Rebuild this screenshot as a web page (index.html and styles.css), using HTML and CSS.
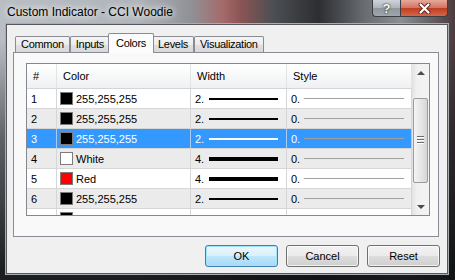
FILE: index.html
```html
<!DOCTYPE html>
<html lang="en">
<head>
    <meta charset="UTF-8">
    <title>Custom Indicator - CCI Woodie</title>
    <link rel="stylesheet" href="styles.css">
</head>
<body>
    <div class="window">
        <div class="titlebar">
            <span class="title">Custom Indicator - CCI Woodie</span>
            <div class="caption">
                <span class="cap-btn help">?</span>
                <span class="cap-btn close">
                    <svg width="13" height="11" viewBox="0 0 13 11">
                        <path d="M2.5 1.5 L10.5 9.5 M10.5 1.5 L2.5 9.5" stroke="#5a2a22" stroke-width="4" stroke-linecap="round"/>
                        <path d="M2.5 1.5 L10.5 9.5 M10.5 1.5 L2.5 9.5" stroke="#fff" stroke-width="2.2" stroke-linecap="round"/>
                    </svg>
                </span>
            </div>
        </div>

        <div class="client">
            <div class="tabs">
                <span class="tab">Common</span>
                <span class="tab">Inputs</span>
                <span class="tab active">Colors</span>
                <span class="tab">Levels</span>
                <span class="tab">Visualization</span>
            </div>

            <div class="panel">
                <div class="list">
                    <div class="grid">
                        <div class="row head">
                            <span>#</span>
                            <span>Color</span>
                            <span>Width</span>
                            <span>Style</span>
                        </div>
                        <div class="row">
                            <span>1</span>
                            <span class="color"><i class="swatch"></i>255,255,255</span>
                            <span class="width">2.<i class="wline w2"></i></span>
                            <span class="style">0.<i class="sline"></i></span>
                        </div>
                        <div class="row alt">
                            <span>2</span>
                            <span class="color"><i class="swatch"></i>255,255,255</span>
                            <span class="width">2.<i class="wline w2"></i></span>
                            <span class="style">0.<i class="sline"></i></span>
                        </div>
                        <div class="row selected">
                            <span>3</span>
                            <span class="color"><i class="swatch"></i>255,255,255</span>
                            <span class="width">2.<i class="wline w2"></i></span>
                            <span class="style">0.<i class="sline"></i></span>
                        </div>
                        <div class="row alt">
                            <span>4</span>
                            <span class="color"><i class="swatch white"></i>White</span>
                            <span class="width">4.<i class="wline w4"></i></span>
                            <span class="style">0.<i class="sline"></i></span>
                        </div>
                        <div class="row">
                            <span>5</span>
                            <span class="color"><i class="swatch red"></i>Red</span>
                            <span class="width">4.<i class="wline w4"></i></span>
                            <span class="style">0.<i class="sline"></i></span>
                        </div>
                        <div class="row alt">
                            <span>6</span>
                            <span class="color"><i class="swatch"></i>255,255,255</span>
                            <span class="width">2.<i class="wline w2"></i></span>
                            <span class="style">0.<i class="sline"></i></span>
                        </div>
                        <div class="row">
                            <span>7</span>
                            <span class="color"><i class="swatch"></i>255,255,255</span>
                            <span class="width">2.<i class="wline w2"></i></span>
                            <span class="style">0.<i class="sline"></i></span>
                        </div>
                    </div>

                    <div class="scrollbar">
                        <div class="sb-btn"><i class="arrow up"></i></div>
                        <div class="track">
                            <div class="thumb">
                                <div class="grip"><i></i><i></i><i></i></div>
                            </div>
                        </div>
                        <div class="sb-btn"><i class="arrow down"></i></div>
                    </div>
                </div>
            </div>

            <div class="buttons">
                <button class="btn default">OK</button>
                <button class="btn">Cancel</button>
                <button class="btn">Reset</button>
            </div>
        </div>
    </div>
</body>
</html>
```

FILE: styles.css
```css
* {
    margin: 0;
    padding: 0;
    box-sizing: border-box;
}

body {
    width: 455px;
    height: 280px;
    overflow: hidden;
    font-family: "Liberation Sans", Arial, sans-serif;
    font-size: 11px;
    color: #000;
    background: #202326;
}

i {
    display: block;
    font-style: normal;
}

.window {
    width: 455px;
    height: 280px;
    background:
        linear-gradient(180deg, rgba(0, 0, 0, 0) 0, rgba(0, 0, 0, 0) 40px, rgba(18, 20, 23, 0.55) 140px, rgba(14, 16, 19, 0.92) 270px),
        linear-gradient(90deg, #b9bec4 0%, #b0b5bb 30%, #8f9196 42%, #a56a6a 49%, #8a5454 53%, #4c4f53 60%, #2c2e31 70%, #686b70 80%, #8b8f94 88%, #4c3b3d 100%);
}

/* title bar */

.titlebar {
    height: 24px;
    display: flex;
    align-items: flex-start;
}

.title {
    margin: 5px 0 0 7px;
    font-size: 12px;
    line-height: 14px;
    text-shadow: 0 0 6px #fff, 0 0 10px rgba(255, 255, 255, 0.8);
}

.caption {
    margin-left: auto;
    margin-right: 7px;
    display: flex;
}

.cap-btn {
    height: 17px;
    border: 1px solid #3b3e42;
    border-top: none;
    display: flex;
    align-items: center;
    justify-content: center;
}

.help {
    width: 28px;
    border-right: none;
    border-radius: 0 0 0 4px;
    background: linear-gradient(#d0d4d9, #adb3ba 50%, #90969d 51%, #a0a6ad);
    color: #fff;
    font-weight: bold;
    font-size: 13px;
    text-shadow: 0 0 2px #222, 0 0 1px #222;
}

.close {
    width: 48px;
    border-radius: 0 0 4px 0;
    background: linear-gradient(#e6a99b, #d0735f 50%, #c13b20 51%, #d4674c);
}

/* dialog body */

.client {
    margin: 0 7px 0 6px;
    height: 250px;
    border: 1px solid #55595e;
    box-shadow: 0 0 0 1px #a8adb2;
    background: #f0f0f0;
    padding: 8px 7px 0 6px;
}

.tabs {
    display: flex;
    align-items: flex-end;
    height: 20px;
    margin: 0 0 -1px 2px;
}

.tab {
    height: 16px;
    margin-bottom: 1px;
    padding: 0 5px;
    border: 1px solid #898c95;
    border-bottom: none;
    border-radius: 2px 2px 0 0;
    background: linear-gradient(#f4f4f4, #ececec 50%, #e0e0e0 51%, #d8d8d8);
    line-height: 15px;
    letter-spacing: -0.3px;
}

.tab.active {
    height: 20px;
    margin: 0 -2px;
    padding: 0 7px;
    background: #fcfcfc;
    line-height: 18px;
    position: relative;
    z-index: 1;
}

.panel {
    height: 185px;
    margin-right: 1px;
    border: 1px solid #898c95;
    background: #f9f9f9;
    padding: 10px 8px 0 12px;
}

/* list view */

.list {
    display: flex;
    height: 153px;
    border: 1px solid #828790;
    background: #fff;
}

.grid {
    flex: 1;
    overflow: hidden;
}

.row {
    display: grid;
    grid-template-columns: 30px 134px 96px 125px;
    height: 20px;
    border-bottom: 1px solid #d6d6d6;
}

.row > span {
    display: flex;
    align-items: center;
    padding-left: 4px;
    border-right: 1px solid #d6d6d6;
    white-space: nowrap;
}

.row.head {
    height: 25px;
    background: linear-gradient(#ffffff, #f7f8f9 50%, #eef0f2);
    border-bottom-color: #d5d5d5;
}

.row.head > span {
    padding-left: 6px;
    border-right-color: #e2e3e5;
}

.row.alt {
    background: #ebebeb;
}

.row.selected {
    background: #3399ff;
    color: #fff;
}

.row.selected > span {
    border-right-color: #a9cdf2;
}

.row > .color {
    padding-left: 3px;
}

.swatch {
    width: 13px;
    height: 13px;
    margin-right: 3px;
    border: 1px solid #7c7c7c;
    background: #000;
}

.swatch.white {
    background: #fff;
}

.swatch.red {
    background: #ff0000;
}

.wline {
    flex: 1;
    margin: 0 8px 0 5px;
    background: #000;
}

.w2 {
    height: 2px;
}

.w4 {
    height: 4px;
}

.selected .wline {
    background: #fff;
}

.sline {
    flex: 1;
    height: 1px;
    margin: 0 7px 0 4px;
    background: #a0a0a0;
}

/* scrollbar */

.scrollbar {
    width: 17px;
    display: flex;
    flex-direction: column;
    background: linear-gradient(90deg, #e2e2e2, #f1f1f1 30%, #f3f3f3);
}

.sb-btn {
    height: 17px;
    display: flex;
    align-items: center;
    justify-content: center;
}

.arrow {
    width: 0;
    height: 0;
    border-left: 4px solid transparent;
    border-right: 4px solid transparent;
}

.arrow.up {
    border-bottom: 4px solid #4a4a4a;
}

.arrow.down {
    border-top: 4px solid #4a4a4a;
}

.track {
    flex: 1;
    padding: 17px 1px 0;
}

.thumb {
    height: 85px;
    border: 1px solid #9b9b9b;
    border-radius: 2px;
    background: linear-gradient(90deg, #f4f4f4, #e6e6e6 50%, #d6d6d6);
    display: flex;
    align-items: center;
    justify-content: center;
}

.grip i {
    width: 7px;
    height: 1px;
    margin: 0 0 2px;
    background: #6b6b6b;
    box-shadow: 0 1px 0 #fff;
}

/* dialog buttons */

.buttons {
    display: flex;
    justify-content: flex-end;
    gap: 8px;
    margin-top: 8px;
}

.btn {
    width: 73px;
    height: 22px;
    border: 1px solid #707070;
    border-radius: 3px;
    background: linear-gradient(#f2f2f2, #ebebeb 50%, #dddddd 51%, #cfcfcf);
    box-shadow: inset 0 0 0 1px rgba(255, 255, 255, 0.7);
    font-family: "Liberation Sans", Arial, sans-serif;
    font-size: 11px;
    color: #000;
}

.btn.default {
    border-color: #3c7fb1;
    background: linear-gradient(#eaf6fd, #d9f0fc 50%, #bee6fd 51%, #a7d9f5);
    box-shadow: inset 0 0 0 1px #9fe3fb;
}
```
